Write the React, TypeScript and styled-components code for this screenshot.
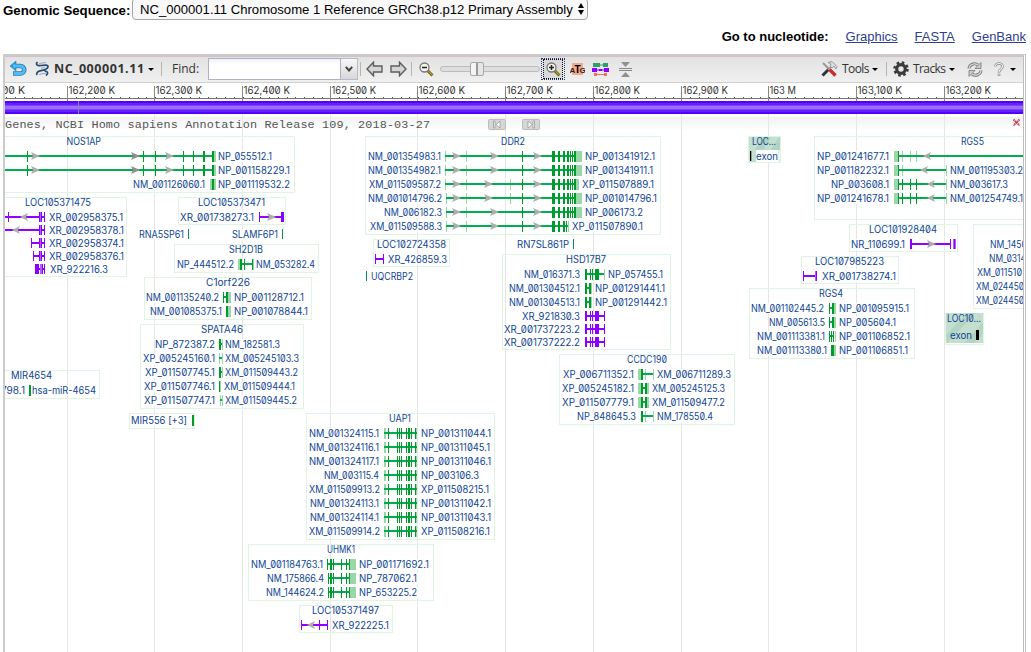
import React from 'react';
import styled, { createGlobalStyle } from 'styled-components';

const Global = createGlobalStyle`
  * { box-sizing: border-box; }
  html, body { margin: 0; background: #fff; overflow: hidden; }
  body { font-family: "Liberation Sans", Arial, sans-serif; color: #000; }
`;

const Page = styled.div`
  width: 1031px;
  height: 652px;
  overflow: hidden;
  display: flex;
  flex-direction: column;
`;
const SequenceRow = styled.div`
  height: 20px;
  padding-left: 3px;
  display: flex;
  align-items: center;
  font-size: 13.1px;
`;
const SequenceLabel = styled.b`
  width: 129px;
  white-space: nowrap;
  font-size: 13.25px;
`;
const SequenceSelect = styled.div`
  width: 456px;
  height: 22px;
  margin-top: -2px;
  padding: 0 3px 0 7px;
  border: 1px solid #a5a5a5;
  border-radius: 4px;
  background: #f8f8f8;
  display: flex;
  align-items: center;
  justify-content: space-between;
  white-space: nowrap;
`;
const LinkRow = styled.nav`
  height: 34px;
  padding: 9px 5px 0 0;
  display: flex;
  justify-content: flex-end;
  gap: 17px;
  font-size: 13px;
  line-height: 15px;
  white-space: nowrap;
`;
const LinkLabel = styled.b``;
const NucleotideLink = styled.a`
  color: #2f3f8f;
  text-decoration: underline;
`;
const Viewer = styled.main`
  width: 1023px;
  height: 600px;
  margin-left: 3px;
  border: 2px solid #cbcbcb;
  border-right: 3px double #c0bcbc;
  border-bottom: 0;
`;
const Toolbar = styled.div`
  height: 27px;
  border-top: 1px solid #d3c3c3;
  border-bottom: 1px solid #d0d0d0;
  background: linear-gradient(#e2e2e2, #f0f0f0);
  display: flex;
  align-items: center;
  font: 12px/14px "Open Sans", sans-serif;
  color: #333;
`;
const Slot = styled.div<{ $w: number }>`
  flex: 0 0 ${p => p.$w}px;
  height: 24px;
  display: flex;
  align-items: center;
  white-space: nowrap;
`;
const Accession = styled(Slot)`
  font-weight: 700;
  font-size: 12.5px;
  letter-spacing: .55px;
`;
const MenuLabel = styled(Slot)`
  letter-spacing: -.6px;
`;
const Spacer = styled.div`flex: 1;`;
const Divider = styled.div`
  width: 1px;
  height: 14px;
  background: #b9b6a8;
`;
const Caret = styled.div`
  border: 3px solid transparent;
  border-top-color: #000;
  border-bottom: 0;
`;
const FindInput = styled.div`
  width: 133px;
  height: 22px;
  border: 1px solid #b0b0cc;
  background: linear-gradient(#f0f1f4, #fff 5px);
`;
const FindTrigger = styled.div`
  width: 17px;
  height: 22px;
  border: 1px solid #b8bcc8;
  border-left: 0;
  background: linear-gradient(#f7f7f7, #d8d8d8);
  display: flex;
  align-items: center;
  justify-content: center;
`;
const SliderTrack = styled.div`
  width: 100px;
  height: 6px;
  border: 1px solid #bcbcbc;
  border-radius: 3px;
  background: #dedede;
  padding-left: 29px;
  display: flex;
  align-items: center;
`;
const SliderThumb = styled.div`
  flex: none;
  width: 14px;
  height: 14px;
  border: 1px solid #a8a8a8;
  border-radius: 2px;
  background: linear-gradient(90deg, #f4f4f4 45%, #999 45%, #999 55%, #e6e6e6 55%);
`;
const FocusButton = styled.div`
  width: 24px;
  height: 22px;
  border: 1px dotted #1d3a8c;
  display: flex;
  align-items: center;
  justify-content: center;
`;
const FocusInner = styled.div`
  width: 20px;
  height: 20px;
  border: 1px dotted #111;
  background: #dadada;
  display: flex;
  align-items: center;
  justify-content: center;
`;
const Block = styled.svg`
  display: block;
  flex: none;
`;
const ChromosomeBar = styled.div`
  height: 13px;
  padding-left: 73px;
  background: linear-gradient(#5500ff 0 2px, #6420ff 2px 4px, #7c42ff 4px 5px, #9a70ff 5px 8px, #7c42ff 8px 9px, #6420ff 9px 11px, #5500ff 11px);
`;
const PositionMark = styled.div`
  width: 1px;
  height: 13px;
  background: #8d7fae;
`;

const GRID = [67, 154, 242, 330, 417, 505, 593, 681, 768, 856, 944];
const LABELS: [string, number][] = [
  ['162,200 K', 116], ['162,300 K', 203], ['162,400 K', 291], ['162,500 K', 377], ['162,600 K', 466],
  ['162,700 K', 554], ['162,800 K', 641], ['162,900 K', 729], ['163 M', 797], ['163,100 K', 903], ['163,200 K', 992],
];

type Label = [string, number, number];
type Exon = [number, number, string];
interface Row {
  y: number;
  left?: Label;
  right?: Label;
  line?: [number, number];
  exons?: Exon[];
  arrows?: number[];
  back?: boolean;
  purple?: boolean;
}
interface Gene {
  box?: [number, number, number, number];
  title?: Label;
  rows: Row[];
}

const TONES: Record<string, string> = {
  d: '#009b2b', l: '#98d8a6', p: '#8c00ff', q: '#b15cff', t: '#089058',
};

const nosExons: Exon[] = [[27, 1, 'd'], [143, 1, 'd'], [155, 1, 'd'], [183, 1, 'd'], [193, 1, 'd'], [203, 2, 'd'], [212, 2, 'd'], [214, 2, 'l']];
const locTail: Exon[] = [[39, 3, 'q'], [39, 1, 'p'], [41, 1, 'p'], [44, 1, 'p']];
const ddrBody: Exon[] = [[552, 3, 'd'], [558, 2, 'd'], [563, 2, 'd'], [567, 2, 'd']];
const ddrTail: Exon[] = [[570, 1, 'd'], [572, 1, 'd'], [574, 2, 'd']];
const ddr = (start: number, mid: Exon, end: number): Exon[] =>
  [[start, 1, 'l'], [466, 1, 'l'], mid, [522, 1, 'd'], ...ddrBody, ...ddrTail, [576, end, 'l']];
const hsd = (tone: string): Exon[] => [[585, 2, tone], [590, 1, tone], [592, 1, tone], [595, 4, tone], [604, 1, tone === 'd' ? 'l' : tone]];
const uap: Exon[] = [[384, 2, 'l'], [388, 1, 'd'], [397, 1, 'd'], [399, 1, 'd'], [401, 1, 'd'], [406, 1, 'd'], [408, 2, 'd'], [411, 1, 'd'], [415, 1, 'd'], [416, 1, 'l']];
const uhmk: Exon[] = [[330, 2, 'd'], [333, 1, 'd'], [341, 1, 'd'], [346, 1, 'd'], [349, 1, 'd'], [350, 6, 'l']];
const rgsFull: Exon[] = [[894, 4, 'l'], [898, 1, 'd'], [902, 1, 'd'], [910, 1, 'd'], [916, 1, 'd'], [946, 1, 'l']];
const ccMid: Exon[] = [[638, 3, 'l'], [641, 2, 'd'], [645, 2, 'd'], [647, 2, 'l']];

const uapLabels: [Label, Label][] = [
  [['NM_001324115.1', 310, 379], ['NP_001311044.1', 422, 491]],
  [['NM_001324116.1', 310, 379], ['NP_001311045.1', 422, 490]],
  [['NM_001324117.1', 310, 379], ['NP_001311046.1', 422, 491]],
  [['NM_003115.4', 325, 379], ['NP_003106.3', 422, 479]],
  [['XM_011509913.2', 310, 380], ['XP_011508215.1', 422, 489]],
  [['NM_001324113.1', 311, 379], ['NP_001311042.1', 422, 491]],
  [['NM_001324114.1', 311, 379], ['NP_001311043.1', 422, 491]],
  [['XM_011509914.2', 310, 380], ['XP_011508216.1', 422, 490]],
];

const GENES: Gene[] = [
  { box: [0, 136, 294, 192], title: ['NOS1AP', 67.5, 101], rows: [
    { y: 156, line: [4, 213], exons: nosExons, arrows: [31, 131, 165], right: ['NP_055512.1', 219, 272] },
    { y: 170, line: [4, 213], exons: nosExons, arrows: [31, 131, 165], right: ['NP_001158229.1', 219, 290] },
    { y: 184, exons: [[210, 6, 'l'], [212, 2, 'd']], left: ['NM_001126060.1', 134, 205], right: ['NP_001119532.2', 219, 290] },
  ] },
  { box: [0, 197, 126, 276], title: ['LOC105371475', 26, 91], rows: [
    { y: 217, purple: true, line: [4, 44], exons: [[8, 1, 'p'], ...locTail], arrows: [20], back: true, right: ['XR_002958375.1', 50, 123] },
    { y: 230, purple: true, line: [4, 44], exons: locTail, arrows: [12], back: true, right: ['XR_002958378.1', 50, 124] },
    { y: 243, purple: true, line: [31, 44], exons: [[31, 1, 'p'], ...locTail], right: ['XR_002958374.1', 50, 124] },
    { y: 256, purple: true, line: [33, 44], exons: [[33, 1, 'p'], ...locTail], right: ['XR_002958376.1', 50, 124] },
    { y: 269, purple: true, line: [35, 44], exons: [[35, 4, 'p'], [40, 2, 'q'], [42, 1, 'p'], [44, 1, 'p']], right: ['XR_922216.3', 51, 108] },
  ] },
  { box: [178, 197, 285, 224], title: ['LOC105373471', 199, 265], rows: [
    { y: 217, purple: true, line: [259, 282], exons: [[259, 1, 'p'], [281, 3, 'p']], arrows: [267], left: ['XR_001738273.1', 181, 254] },
  ] },
  { rows: [{ y: 234, exons: [[188, 1, 't']], left: ['RNA5SP61', 140, 184] }] },
  { rows: [{ y: 234, exons: [[282, 1, 't']], left: ['SLAMF6P1', 233, 278] }] },
  { box: [174, 244, 318, 272], title: ['SH2D1B', 230, 263], rows: [
    { y: 264, line: [240, 253], exons: [[238, 2, 'l'], [240, 2, 'd'], [244, 1, 'd'], [252, 1, 'd'], [253, 1, 'l']], left: ['NP_444512.2', 178, 234], right: ['NM_053282.4', 257, 315] },
  ] },
  { box: [144, 277, 311, 319], title: ['C1orf226', 207, 250], rows: [
    { y: 297, line: [223, 228], exons: [[223, 1, 'd'], [226, 2, 'd'], [228, 3, 'l']], left: ['NM_001135240.2', 147, 219], right: ['NP_001128712.1', 235, 304] },
    { y: 311, exons: [[226, 2, 'd'], [228, 3, 'l']], left: ['NM_001085375.1', 151, 222], right: ['NP_001078844.1', 235, 308] },
  ] },
  { box: [140, 324, 303, 408], title: ['SPATA46', 202, 243], rows: [
    { y: 344, line: [219, 222], exons: [[219, 2, 'd'], [222, 1, 'l']], left: ['NP_872387.2', 156, 215], right: ['NM_182581.3', 226, 280] },
    { y: 358, line: [219, 222], exons: [[219, 1, 'l'], [222, 1, 'l']], left: ['XP_005245160.1', 144, 215], right: ['XM_005245103.3', 226, 299] },
    { y: 372, line: [219, 222], exons: [[219, 2, 'd'], [222, 1, 'l']], left: ['XP_011507745.1', 146, 215], right: ['XM_011509443.2', 226, 298] },
    { y: 386, exons: [[219, 1, 'd'], [220, 1, 'l']], left: ['XP_011507746.1', 145, 215], right: ['XM_011509444.1', 225, 295] },
    { y: 400, line: [220, 222], exons: [[220, 1, 'l'], [222, 1, 'l']], left: ['XP_011507747.1', 145, 215], right: ['XM_011509445.2', 226, 297] },
  ] },
  { box: [129, 413, 194, 428], rows: [{ y: 420, exons: [[192, 2, 'd']], left: ['MIR556 [+3]', 132, 187] }] },
  { box: [0, 370, 99, 398], title: ['MIR4654', 12, 52], rows: [
    { y: 390, exons: [[29, 2, 'd']], left: ['798.1', 2, 25], right: ['hsa-miR-4654', 33, 96] },
  ] },
  { box: [365, 136, 660, 234], title: ['DDR2', 502, 525], rows: [
    { y: 156, line: [445, 576], exons: ddr(445, [522, 1, 'd'], 6), arrows: [452, 490, 533], left: ['NM_001354983.1', 369, 441], right: ['NP_001341912.1', 586, 655] },
    { y: 170, line: [445, 576], exons: ddr(445, [522, 1, 'd'], 6), arrows: [452, 490, 533], left: ['NM_001354982.1', 369, 441], right: ['NP_001341911.1', 586, 653] },
    { y: 184, line: [445, 576], exons: ddr(445, [510, 1, 'l'], 3), arrows: [452, 484, 533], left: ['XM_011509587.2', 370, 441], right: ['XP_011507889.1', 583, 654] },
    { y: 198, line: [446, 576], exons: ddr(446, [510, 1, 'l'], 6), arrows: [452, 484, 533], left: ['NM_001014796.2', 369, 442], right: ['NP_001014796.1', 586, 657] },
    { y: 212, line: [446, 576], exons: ddr(446, [522, 1, 'd'], 6), arrows: [452, 490, 533], left: ['NM_006182.3', 385, 442], right: ['NP_006173.2', 586, 643] },
    { y: 226, line: [446, 568], exons: [[446, 1, 'l'], [466, 1, 'l'], [522, 1, 'd'], ...ddrBody.slice(0, 3), [566, 1, 'd'], [568, 1, 'l']], arrows: [452, 490, 533], left: ['XM_011509588.3', 371, 442], right: ['XP_011507890.1', 573, 643] },
  ] },
  { box: [373, 239, 449, 266], title: ['LOC102724358', 378, 446], rows: [
    { y: 259, purple: true, line: [375, 384], exons: [[375, 1, 'p'], [383, 1, 'p']], right: ['XR_426859.3', 389, 447] },
  ] },
  { rows: [{ y: 244, exons: [[573, 1, 't']], left: ['RN7SL861P', 518, 569] }] },
  { rows: [{ y: 276, exons: [[366, 1, 't']], right: ['UQCRBP2', 372, 413] }] },
  { box: [502, 254, 670, 349], title: ['HSD17B7', 567, 606], rows: [
    { y: 274, line: [585, 604], exons: hsd('d'), left: ['NM_016371.3', 525, 580], right: ['NP_057455.1', 609, 663] },
    { y: 288, line: [585, 591], exons: [[585, 2, 'd'], [589, 2, 'd'], [591, 1, 'l']], left: ['NM_001304512.1', 510, 580], right: ['NP_001291441.1', 596, 665] },
    { y: 302, line: [585, 591], exons: [[585, 2, 'd'], [589, 2, 'd'], [591, 1, 'l']], left: ['NM_001304513.1', 510, 580], right: ['NP_001291442.1', 596, 667] },
    { y: 316, purple: true, line: [585, 604], exons: hsd('p'), left: ['XR_921830.3', 523, 580] },
    { y: 329, purple: true, line: [585, 604], exons: hsd('p'), left: ['XR_001737223.2', 505, 580] },
    { y: 342, purple: true, line: [585, 604], exons: hsd('p'), left: ['XR_001737222.2', 505, 580] },
  ] },
  { box: [559, 354, 734, 424], title: ['CCDC190', 628, 667], rows: [
    { y: 374, line: [641, 653], exons: [[638, 3, 'l'], [641, 2, 'd'], [645, 1, 'l'], [653, 1, 'l']], left: ['XP_006711352.1', 564, 634], right: ['XM_006711289.3', 658, 731] },
    { y: 388, line: [641, 647], exons: ccMid, left: ['XP_005245182.1', 563, 634], right: ['XM_005245125.3', 653, 725] },
    { y: 402, line: [641, 647], exons: ccMid, left: ['XP_011507779.1', 563, 634], right: ['XM_011509477.2', 653, 725] },
    { y: 416, line: [641, 653], exons: [[641, 2, 'd'], [645, 1, 'l'], [653, 1, 'l']], left: ['NP_848645.3', 578, 636], right: ['NM_178550.4', 658, 713] },
  ] },
  { box: [306, 413, 494, 539], title: ['UAP1', 390, 411], rows: uapLabels.map(([left, right], i) => (
    { y: 433 + i * 14, line: [384, 417] as [number, number], exons: uap, left, right }
  )) },
  { box: [248, 544, 433, 600], title: ['UHMK1', 328, 355], rows: [
    { y: 564, line: [327, 350], exons: [[327, 1, 'd'], ...uhmk], left: ['NM_001184763.1', 252, 323], right: ['NP_001171692.1', 360, 429] },
    { y: 578, line: [328, 350], exons: [[328, 1, 'd'], ...uhmk], left: ['NM_175866.4', 268, 324], right: ['NP_787062.1', 360, 417] },
    { y: 592, line: [328, 350], exons: [[328, 1, 'd'], ...uhmk], left: ['NM_144624.2', 267, 324], right: ['NP_653225.2', 360, 417] },
  ] },
  { box: [299, 605, 392, 632], title: ['LOC105371497', 313, 379], rows: [
    { y: 625, purple: true, line: [301, 327], exons: [[301, 1, 'p'], [319, 1, 'p'], [327, 1, 'p']], arrows: [307], back: true, right: ['XR_922225.1', 333, 389] },
  ] },
  { box: [814, 136, 1030, 219], title: ['RGS5', 962, 984], rows: [
    { y: 156, line: [898, 1030], exons: [[894, 4, 'l'], [898, 1, 'd'], [902, 1, 'l'], [910, 1, 'l'], [916, 1, 'l']], arrows: [923], back: true, left: ['NP_001241677.1', 818, 889] },
    { y: 170, line: [898, 946], exons: [[894, 4, 'l'], [898, 1, 'd'], [902, 1, 'l'], [946, 1, 'l']], arrows: [920], back: true, left: ['NP_001182232.1', 818, 889], right: ['NM_001195303.2', 951, 1023] },
    { y: 184, line: [898, 946], exons: rgsFull, arrows: [927], back: true, left: ['NP_003608.1', 832, 889], right: ['NM_003617.3', 951, 1008] },
    { y: 198, line: [898, 946], exons: rgsFull, arrows: [927], back: true, left: ['NP_001241678.1', 818, 889], right: ['NM_001254749.1', 951, 1023] },
  ] },
  { box: [849, 224, 957, 251], title: ['LOC101928404', 870, 937], rows: [
    { y: 244, purple: true, line: [910, 951], exons: [[910, 2, 'p'], [950, 1, 'p'], [953, 3, 'q'], [954, 1, 'p']], arrows: [927], left: ['NR_110699.1', 852, 905] },
  ] },
  { box: [973, 224, 1030, 308], rows: [
    { y: 244, left: ['NM_1450', 991, 1027] },
    { y: 258, left: ['NM_0314', 990, 1026] },
    { y: 272, left: ['XM_011510', 978, 1022] },
    { y: 286, left: ['XM_024450', 977, 1024] },
    { y: 300, left: ['XM_024450', 977, 1024] },
  ] },
  { box: [801, 256, 898, 283], title: ['LOC107985223', 816, 884], rows: [
    { y: 276, purple: true, line: [803, 815], exons: [[803, 1, 'p'], [815, 2, 'q'], [816, 1, 'p']], right: ['XR_001738274.1', 823, 896] },
  ] },
  { box: [749, 288, 914, 358], title: ['RGS4', 820, 843], rows: [
    { y: 308, line: [829, 834], exons: [[829, 1, 'd'], [832, 2, 'd'], [834, 2, 'l']], left: ['NM_001102445.2', 752, 824], right: ['NP_001095915.1', 840, 909] },
    { y: 322, line: [829, 834], exons: [[829, 1, 'd'], [832, 2, 'd'], [834, 2, 'l']], left: ['NM_005613.5', 770, 825], right: ['NP_005604.1', 840, 896] },
    { y: 336, line: [829, 834], exons: [[829, 1, 'd'], [831, 1, 'd'], [833, 1, 'd'], [835, 1, 'l']], left: ['NM_001113381.1', 758, 825], right: ['NP_001106852.1', 840, 910] },
    { y: 350, exons: [[831, 3, 'd'], [834, 2, 'l']], left: ['NM_001113380.1', 758, 827], right: ['NP_001106851.1', 840, 908] },
  ] },
];

const MapText = styled.text`
  font-family: Inter, sans-serif;
  font-size: 9.7px;
  font-feature-settings: "zero";
  fill: #0f4595;
`;
const RulerText = styled(MapText)`
  fill: #333;
`;

function Tag({ label, y, plain }: { label: Label; y: number; plain?: boolean }) {
  const [text, a, b] = label;
  return (
    <g>
      {!plain && <rect x={a - 1} y={y - 9} width={b - a + 2} height={11} fill="#fff" />}
      <MapText x={a - 1} y={y} textLength={b - a + 1} lengthAdjust="spacingAndGlyphs">{text}</MapText>
    </g>
  );
}

function Transcript({ row }: { row: Row }) {
  const { y, line, exons = [], arrows = [], left, right, back, purple } = row;
  return (
    <g>
      {left && <Tag label={left} y={y + 4} />}
      {right && <Tag label={right} y={y + 4} />}
      {exons.filter(e => e[2] === 'l').map(([x, w, t], i) => (
        <rect key={i} x={x} y={y - 5} width={w} height={11} fill={TONES[t]} />
      ))}
      {line && <rect x={line[0]} y={y - 1} width={line[1] - line[0]} height={2} fill={purple ? '#9200ff' : '#00ad50'} />}
      {exons.filter(e => e[2] !== 'l').map(([x, w, t], i) => (
        <rect key={i} x={x} y={y - 5} width={w} height={purple || t === 't' ? 10 : 11} fill={TONES[t]} />
      ))}
      {arrows.map(x => (
        <path
          key={x}
          d={back ? `M${x} ${y}l8-4-2 4 2 4z` : `M${x + 9} ${y}l-9-4 2 4-2 4z`}
          fill={x === 131 ? '#8f8f8f' : '#adadad'}
        />
      ))}
    </g>
  );
}

function GeneGroup({ gene }: { gene: Gene }) {
  const { box, title, rows } = gene;
  return (
    <g>
      {box && <rect x={box[0] + 0.5} y={box[1] + 0.5} width={box[2] - box[0]} height={box[3] - box[1]} fill="none" stroke="#dff4e2" />}
      {title && box && <Tag label={title} y={box[1] + 9.4} plain />}
      {rows.map((row, i) => <Transcript key={i} row={row} />)}
    </g>
  );
}

function StepButton({ x, flip }: { x: number; flip?: boolean }) {
  return (
    <g transform={`translate(${x} 119)`}>
      <rect x=".5" y=".5" width="17" height="10" rx="1" fill="#d6d6d6" stroke="#bdbdbd" />
      <path d={flip ? 'M6 2v7l4-3.500zM11 2h1.500v7H11z' : 'M12 2v7L8 5.500zM5.500 2H7v7H5.500z'} fill="#fff" stroke="#8f8f8f" strokeWidth=".7" />
    </g>
  );
}

function GeneMap() {
  return (
    <Block width={1018} height={538} viewBox="5 114 1018 538">
      <defs>
        <linearGradient id="head" x1="0" y1="0" x2="0" y2="1">
          <stop offset="0" stopColor="#f2f2f2" />
          <stop offset="1" stopColor="#fff" />
        </linearGradient>
      </defs>
      <rect x="5" y="117" width="1018" height="14" fill="url(#head)" />
      {GRID.map(x => <rect key={x} x={x} y={114} width={1} height={538} fill="#e6e6e6" />)}
      <text x="5" y="128" textLength="425" fontFamily="Liberation Mono, monospace" fontSize="11.8" fill="#555">
        Genes, NCBI Homo sapiens Annotation Release 109, 2018-03-27
      </text>
      <StepButton x={488} />
      <StepButton x={522} flip />
      <path d="M1013.500 119.500l6 6m0-6l-6 6" stroke="#c2405c" strokeWidth="2" strokeDasharray="1.5 .5" />
      {GENES.map((gene, i) => <GeneGroup key={i} gene={gene} />)}
      <rect x="748.5" y="136.500" width="32" height="26" fill="#e8f5ec" stroke="#dff4e2" />
      <path d="M749 137h31v13h-24v12h-7z" fill="#c3dfcf" />
      <path d="M755 150l8-13h8l-8 13zM771 150l8-13h1v13z" fill="#b2d3c1" />
      <rect x="756" y="150" width="22" height="12" fill="#fff" />
      <rect x="750" y="151" width="1.300" height="10" />
      <Tag label={['LOC...', 753, 776]} y={145.400} plain />
      <Tag label={['exon', 757, 778]} y={160} plain />
      <rect x="945.500" y="313.500" width="38" height="31" fill="#fff" stroke="#dff4e2" />
      <rect x="946" y="313" width="37" height="30" fill="#c3dfcf" />
      <path d="M946 335l21-22h9l-29 30zM964 343l19-21v12l-9 9z" fill="#b5d5c3" />
      <rect x="976" y="330" width="3" height="10" />
      <Tag label={['LOC10...', 948, 981]} y={322.400} plain />
      <Tag label={['exon', 951, 972]} y={339} plain />
    </Block>
  );
}

function Ruler() {
  const ticks = Array.from({ length: 117 }, (_, i) => 6 + i * 8.77).filter(x => x < 1023);
  return (
    <Block width={1018} height={18} viewBox="5 83 1018 18">
      <rect x="5" y="98" width="1018" height="1" fill="#777" />
      {ticks.map(x => <rect key={x} x={Math.round(x)} y="97" width="1" height="1" fill="#555" />)}
      {GRID.map(x => <rect key={x} x={x} y="86" width="1" height="15" fill="#888" />)}
      <RulerText x="-22" y="94" textLength="47" lengthAdjust="spacingAndGlyphs">162,100 K</RulerText>
      {LABELS.map(([text, end], i) => (
        <RulerText key={text} x={GRID[i] + 1.5} y="94" textLength={end - GRID[i] - 2.5} lengthAdjust="spacingAndGlyphs">{text}</RulerText>
      ))}
    </Block>
  );
}

function Magnifier({ plus }: { plus?: boolean }) {
  return (
    <Block width="15" height="15" viewBox="0 0 15 15">
      <path d="M8.500 8.500l5 5" stroke="#6d6512" strokeWidth="3" />
      <path d="M9.500 9.200l4 4" stroke="#c9bc43" strokeWidth="1" />
      <circle cx="5.500" cy="5.500" r="4.500" fill="#f4f4ee" stroke="#777" strokeWidth="1.300" />
      <path d={plus ? 'M3 5.500h5M5.500 3v5' : 'M3 5.500h5'} stroke="#222" strokeWidth="1.500" />
    </Block>
  );
}

function BlockArrow({ right }: { right?: boolean }) {
  return (
    <Block width="17" height="16" viewBox="0 0 17 16">
      <path
        d="M1 8L7.500 1.200v3.800H16v6H7.500v3.800z"
        transform={right ? 'matrix(-1 0 0 1 17 0)' : undefined}
        fill="#d5d5d5" stroke="#5e5e5e" strokeWidth="1.400"
      />
    </Block>
  );
}

function ViewerToolbar() {
  return (
    <Toolbar>
      <Slot $w={5} />
      <Slot $w={25}>
        <Block width="17" height="16" viewBox="0 0 17 16">
          <path d="M5 5h5.500a3.500 3.500 0 0 1 0 7.500H3" fill="none" stroke="#2878b8" strokeWidth="4.600" />
          <path d="M0 5l6-5v10z" fill="#2e9ad8" stroke="#2878b8" strokeWidth=".6" />
          <path d="M3 5h7.500a3.500 3.500 0 0 1 0 7.500H3.600" fill="none" stroke="#52bdf0" strokeWidth="2.800" />
        </Block>
      </Slot>
      <Slot $w={19}>
        <Block width="15" height="16" viewBox="0 0 15 16">
          <path d="M2.500 1C0 3.500 2.500 5 6 4.500s7-1 7 1-3.500 3.500-7 4.200-5 2.300-4 4.300M11 14.500c3-2.500 1.500-4.500-1.500-4.500" fill="none" stroke="#244a72" strokeWidth="1.700" />
          <path d="M4 2.500l7-1M4 13.500l7-1.500M6 7.200l4-.5" stroke="#8da6be" />
        </Block>
      </Slot>
      <Accession $w={94}>NC_000001.11</Accession>
      <Slot $w={13}><Caret /></Slot>
      <Slot $w={11}><Divider /></Slot>
      <Slot $w={36}>Find:</Slot>
      <Slot $w={152}>
        <FindInput />
        <FindTrigger>
          <Block width="8" height="6" viewBox="0 0 8 6"><path d="M.8.800L4 4.500 7.200.8" fill="none" stroke="#444" strokeWidth="2" /></Block>
        </FindTrigger>
      </Slot>
      <Slot $w={6}><Divider /></Slot>
      <Slot $w={24}><BlockArrow /></Slot>
      <Slot $w={21}><BlockArrow right /></Slot>
      <Slot $w={8}><Divider /></Slot>
      <Slot $w={21}><Magnifier /></Slot>
      <Slot $w={101}><SliderTrack><SliderThumb /></SliderTrack></Slot>
      <Slot $w={29}><FocusButton><FocusInner><Magnifier plus /></FocusInner></FocusButton></Slot>
      <Slot $w={22}>
        <Block width="15" height="14" viewBox="0 0 15 14">
          <rect x="2" y="1" width="11" height="12" fill="#f5a98c" />
          <text y="10.500" fontSize="8" fontFamily="Liberation Sans, sans-serif" fontWeight="700" fill="#302020">
            <tspan x="-.5">A</tspan>
            <tspan x="4.500" fontSize="10" fill="#000">T</tspan>
            <tspan x="9.500">G</tspan>
          </text>
        </Block>
      </Slot>
      <Slot $w={27}>
        <Block width="17" height="14" viewBox="0 0 17 14">
          <path d="M1 1h7v4H1zM11 1h5v4h-5z" fill="#2da06a" />
          <path d="M8 3h3" stroke="#2da06a" />
          <path d="M0 6h5v4H0zM7 7h3v2H7zM12 6h5v4h-5z" fill="#8c00ff" />
          <path d="M0 8h17" stroke="#8c00ff" />
          <path d="M2 11h3v3H2zM12 11h3v3h-3z" fill="#f07058" />
          <path d="M5 12.500h7" stroke="#f07058" />
        </Block>
      </Slot>
      <Slot $w={14}>
        <Block width="13" height="15" viewBox="0 0 13 15">
          <path d="M2 0h9L6.500 5zM2 15h9L6.500 10z" fill="#909090" />
          <path d="M0 6.500h13M0 8.500h13" stroke="#888" />
        </Block>
      </Slot>
      <Spacer />
      <Slot $w={21}>
        <Block width="17" height="16" viewBox="0 0 17 16">
          <path d="M2 2l6 6" stroke="#999" strokeWidth="2" />
          <path d="M8 8l6.500 6.500" stroke="#cf2929" strokeWidth="3.200" />
          <path d="M7.500 8.500l-6 6" stroke="#333" strokeWidth="3" />
          <path d="M11 5l-4 4" stroke="#999" strokeWidth="2" />
          <path d="M7 1.500l4-1 5 5-1 2.500-2-3-2 2-2-2 1-2z" fill="#ddd" stroke="#888" strokeWidth=".8" />
        </Block>
      </Slot>
      <MenuLabel $w={30}>Tools</MenuLabel>
      <Slot $w={14}><Caret /></Slot>
      <Slot $w={7}><Divider /></Slot>
      <Slot $w={20}>
        <Block width="16" height="16" viewBox="0 0 16 16">
          <circle cx="8" cy="8" r="6.500" fill="none" stroke="#3b3b3b" strokeWidth="2.500" strokeDasharray="2.550 2.550" />
          <circle cx="8" cy="8" r="4.300" fill="none" stroke="#3b3b3b" strokeWidth="3.200" />
        </Block>
      </Slot>
      <MenuLabel $w={36}>Tracks</MenuLabel>
      <Slot $w={18}><Caret /></Slot>
      <Slot $w={27}>
        <Block width="16" height="15" viewBox="0 0 16 15">
          <path d="M2 6.500a5.500 5 0 0 1 9-3.500M14 8.500a5.500 5 0 0 1-9 3.500" fill="none" stroke="#777" strokeWidth="3" />
          <path d="M14 .5v6H8zM2 14.500v-6h6z" fill="#ccc" stroke="#777" strokeWidth=".8" />
          <path d="M2 6.500a5.500 5 0 0 1 9-3.500M14 8.500a5.500 5 0 0 1-9 3.500" fill="none" stroke="#ddd" strokeWidth="1.200" />
        </Block>
      </Slot>
      <Slot $w={16}>
        <Block width="10" height="15" viewBox="0 0 10 15">
          <path d="M1.500 4.500c0-4 7-4 7 0 0 2.500-3.500 2.500-3.500 6M5 11.800v2.200" fill="none" stroke="#888" strokeWidth="2.600" />
          <path d="M1.500 4.500c0-4 7-4 7 0 0 2.500-3.500 2.500-3.500 5.500M5 12.300v1.200" fill="none" stroke="#f4f4f4" strokeWidth="1.200" />
        </Block>
      </Slot>
      <Slot $w={13}><Caret /></Slot>
    </Toolbar>
  );
}

export default function App() {
  return (
    <Page>
      <Global />
      <SequenceRow>
        <SequenceLabel>Genomic Sequence:</SequenceLabel>
        <SequenceSelect>
          NC_000001.11 Chromosome 1 Reference GRCh38.p12 Primary Assembly
          <Block width="6" height="12" viewBox="0 0 6 12"><path d="M0 5l3-5 3 5zM0 7h6l-3 5z" /></Block>
        </SequenceSelect>
      </SequenceRow>
      <LinkRow>
        <LinkLabel>Go to nucleotide:</LinkLabel>
        <NucleotideLink>Graphics</NucleotideLink>
        <NucleotideLink>FASTA</NucleotideLink>
        <NucleotideLink>GenBank</NucleotideLink>
      </LinkRow>
      <Viewer>
        <ViewerToolbar />
        <Ruler />
        <ChromosomeBar><PositionMark /></ChromosomeBar>
        <GeneMap />
      </Viewer>
    </Page>
  );
}
